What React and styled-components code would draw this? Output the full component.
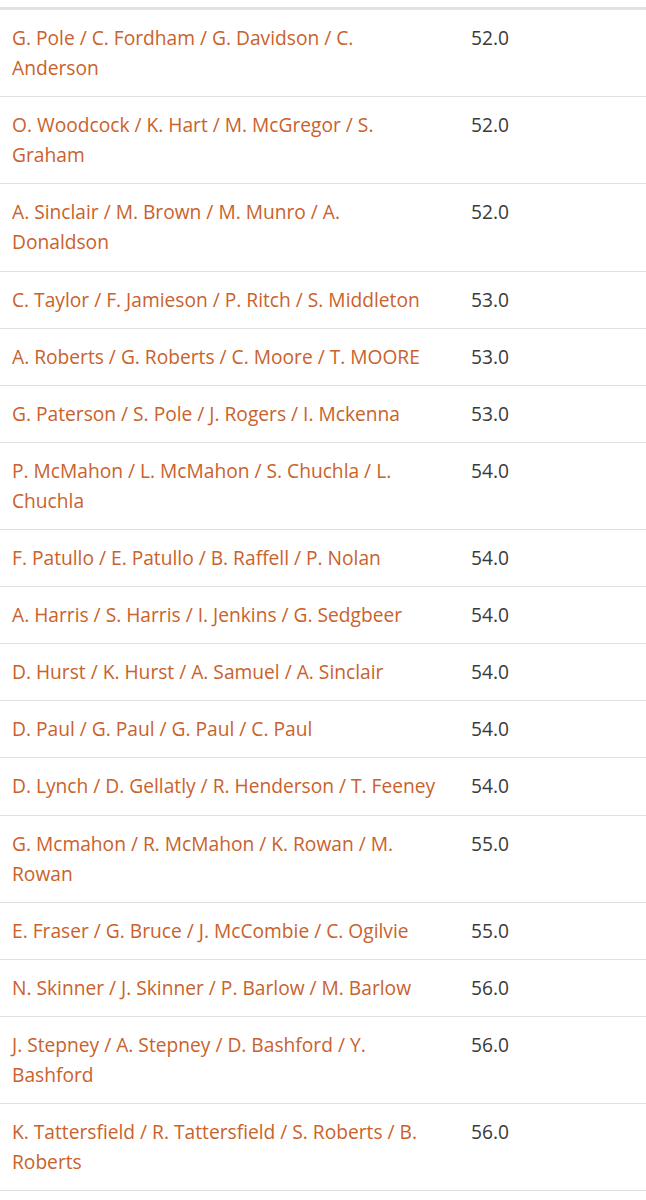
import React from 'react';
import styled, { createGlobalStyle } from 'styled-components';

const GlobalStyle = createGlobalStyle`
  body {
    margin: 0;
    background: #fff;
    font-family: "Open Sans", "Liberation Sans", sans-serif;
  }
`;

const Table = styled.div`
  margin-top: 7px;
  border-top: 3px solid #e2e2e2;
`;

const Row = styled.div`
  display: grid;
  grid-template-columns: 459px 1fr;
  border-bottom: 1px solid #e0e0e0;
`;

const Cell = styled.div`
  padding: 13px 12px;
  font-size: 19.2px;
  line-height: 30.1px;
`;

const Names = styled(Cell)`
  padding-right: 21px;
  color: #c9622b;
`;

const Score = styled(Cell)`
  color: #3a3a3a;
`;

const rows = [
  ['G. Pole / C. Fordham / G. Davidson / C. Anderson', '52.0'],
  ['O. Woodcock / K. Hart / M. McGregor / S. Graham', '52.0'],
  ['A. Sinclair / M. Brown / M. Munro / A. Donaldson', '52.0'],
  ['C. Taylor / F. Jamieson / P. Ritch / S. Middleton', '53.0'],
  ['A. Roberts / G. Roberts / C. Moore / T. MOORE', '53.0'],
  ['G. Paterson / S. Pole / J. Rogers / I. Mckenna', '53.0'],
  ['P. McMahon / L. McMahon / S. Chuchla / L. Chuchla', '54.0'],
  ['F. Patullo / E. Patullo / B. Raffell / P. Nolan', '54.0'],
  ['A. Harris / S. Harris / I. Jenkins / G. Sedgbeer', '54.0'],
  ['D. Hurst / K. Hurst / A. Samuel / A. Sinclair', '54.0'],
  ['D. Paul / G. Paul / G. Paul / C. Paul', '54.0'],
  ['D. Lynch / D. Gellatly / R. Henderson / T. Feeney', '54.0'],
  ['G. Mcmahon / R. McMahon / K. Rowan / M. Rowan', '55.0'],
  ['E. Fraser / G. Bruce / J. McCombie / C. Ogilvie', '55.0'],
  ['N. Skinner / J. Skinner / P. Barlow / M. Barlow', '56.0'],
  ['J. Stepney / A. Stepney / D. Bashford / Y. Bashford', '56.0'],
  ['K. Tattersfield / R. Tattersfield / S. Roberts / B. Roberts', '56.0'],
];

export default function App() {
  return (
    <>
      <GlobalStyle />
      <Table>
        {rows.map(([names, score], i) => (
          <Row key={i}>
            <Names>{names}</Names>
            <Score>{score}</Score>
          </Row>
        ))}
      </Table>
    </>
  );
}
